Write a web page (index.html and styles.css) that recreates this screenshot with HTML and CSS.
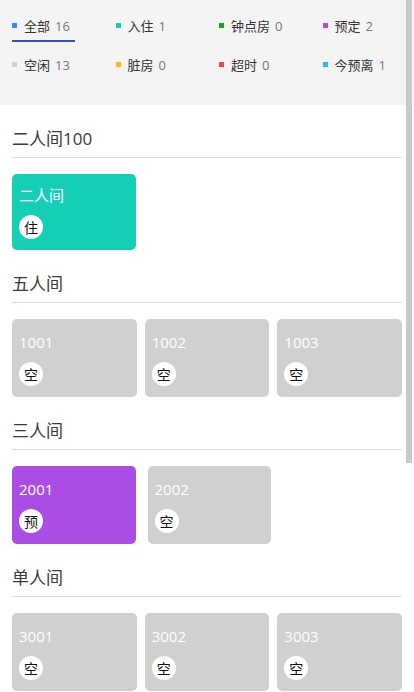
FILE: index.html
```html
<!DOCTYPE html>
<html lang="zh">
<head>
<meta charset="utf-8">
<title>房态</title>
<link rel="stylesheet" href="styles.css">
</head>
<body>
<div class="page">
  <div class="filters">
    <div class="filter filter--active"><i class="dot dot--all"></i><span class="label">全部</span><span class="count">16</span></div>
    <div class="filter"><i class="dot dot--in"></i><span class="label">入住</span><span class="count">1</span></div>
    <div class="filter"><i class="dot dot--hour"></i><span class="label">钟点房</span><span class="count">0</span></div>
    <div class="filter"><i class="dot dot--book"></i><span class="label">预定</span><span class="count">2</span></div>
    <div class="filter"><i class="dot dot--free"></i><span class="label">空闲</span><span class="count">13</span></div>
    <div class="filter"><i class="dot dot--dirty"></i><span class="label">脏房</span><span class="count">0</span></div>
    <div class="filter"><i class="dot dot--over"></i><span class="label">超时</span><span class="count">0</span></div>
    <div class="filter"><i class="dot dot--leave"></i><span class="label">今预离</span><span class="count">1</span></div>
  </div>

  <section class="group">
    <h2 class="group-title">二人间100</h2>
    <div class="rooms rooms--loose">
      <div class="room room--in room--short"><div class="room-name">二人间</div><span class="badge">住</span></div>
    </div>
  </section>

  <section class="group">
    <h2 class="group-title">五人间</h2>
    <div class="rooms">
      <div class="room room--free"><div class="room-name">1001</div><span class="badge">空</span></div>
      <div class="room room--free"><div class="room-name">1002</div><span class="badge">空</span></div>
      <div class="room room--free"><div class="room-name">1003</div><span class="badge">空</span></div>
    </div>
  </section>

  <section class="group">
    <h2 class="group-title">三人间</h2>
    <div class="rooms rooms--loose">
      <div class="room room--book"><div class="room-name">2001</div><span class="badge">预</span></div>
      <div class="room room--free"><div class="room-name">2002</div><span class="badge">空</span></div>
    </div>
  </section>

  <section class="group">
    <h2 class="group-title">单人间</h2>
    <div class="rooms">
      <div class="room room--free"><div class="room-name">3001</div><span class="badge">空</span></div>
      <div class="room room--free"><div class="room-name">3002</div><span class="badge">空</span></div>
      <div class="room room--free"><div class="room-name">3003</div><span class="badge">空</span></div>
    </div>
  </section>

  <div class="scroll-thumb"></div>
</div>
</body>
</html>
```

FILE: styles.css
```css
html, body {
  margin: 0;
  padding: 0;
  height: 100%;
  overflow: hidden;
  background: #fff;
}

body {
  font-family: "Open Sans", "Noto Sans CJK SC", sans-serif;
  color: #333;
}

.page {
  position: relative;
  width: 414px;
  height: 692px;
  overflow: hidden;
}

.filters {
  background: #f4f4f4;
  display: grid;
  grid-template-columns: repeat(4, 1fr);
  row-gap: 13px;
  padding: 16px 0 24px;
}

.filter {
  justify-self: start;
  display: inline-flex;
  align-items: center;
  height: 20px;
  margin-left: 12px;
  padding: 0 5px 4px 0;
  border-bottom: 2px solid transparent;
  font-size: 13px;
  line-height: 20px;
}

.filter--active {
  border-bottom-color: #2f4fd8;
}

.dot {
  display: block;
  width: 5px;
  height: 5px;
  margin-right: 7px;
  margin-top: -1px;
}
.dot--all { background: #2f8cff; }
.dot--in { background: #14cfb5; }
.dot--hour { background: #0fa81a; }
.dot--book { background: #ab4ce4; }
.dot--free { background: #d0d0d0; }
.dot--dirty { background: #ffb60f; }
.dot--over { background: #f24848; }
.dot--leave { background: #1ebdf2; }

.label {
  color: #333;
}

.count {
  color: #777;
  margin-left: 5px;
}

.group {
  padding: 22px 12px 0;
}

.group-title {
  margin: 0;
  font-size: 17px;
  font-weight: normal;
  line-height: 24px;
  color: #3a3a3a;
  padding-bottom: 6px;
  border-bottom: 1px solid #dedede;
}

.rooms {
  display: grid;
  grid-template-columns: repeat(3, 1fr);
  column-gap: 8px;
  margin-top: 16px;
}

.rooms--loose {
  display: flex;
  column-gap: 12px;
}

.rooms--loose .room {
  width: 123.5px;
}

.room {
  box-sizing: border-box;
  border-radius: 5px;
  padding: 13px 7px 11px;
  display: flex;
  flex-direction: column;
  align-items: flex-start;
  gap: 10px;
}

.room--short {
  padding-top: 11px;
}

.room--in { background: #14cfb6; }
.room--book { background: #ab4ce4; }
.room--free { background: #d0d0d0; }

.room-name {
  font-size: 15px;
  line-height: 20px;
  color: #fff;
}

.badge {
  width: 24px;
  height: 24px;
  border-radius: 50%;
  background: #fff;
  color: #111;
  font-family: "Noto Sans CJK SC", sans-serif;
  font-size: 14px;
  line-height: 24px;
  text-align: center;
}

.scroll-thumb {
  position: absolute;
  top: 0;
  left: 406px;
  width: 6px;
  height: 463px;
  background: #c9c9c9;
}
```
